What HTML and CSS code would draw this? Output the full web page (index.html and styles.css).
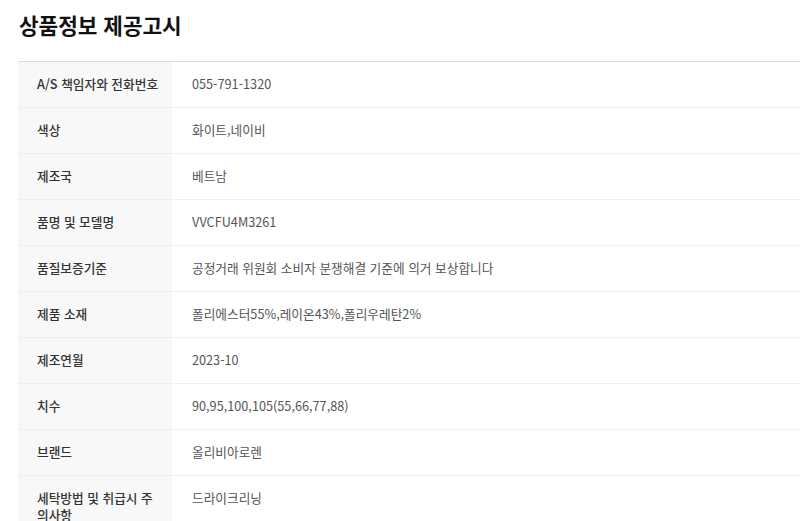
FILE: index.html
```html
<!DOCTYPE html>
<html lang="ko">
<head>
<meta charset="utf-8">
<link rel="stylesheet" href="styles.css">
</head>
<body>
<div class="page">
  <h2 class="title">상품정보 제공고시</h2>
  <table class="info">
    <tbody>
      <tr><th>A/S 책임자와 전화번호</th><td>055-791-1320</td></tr>
      <tr><th>색상</th><td>화이트,네이비</td></tr>
      <tr><th>제조국</th><td>베트남</td></tr>
      <tr><th>품명 및 모델명</th><td>VVCFU4M3261</td></tr>
      <tr><th>품질보증기준</th><td>공정거래 위원회 소비자 분쟁해결 기준에 의거 보상합니다</td></tr>
      <tr><th>제품 소재</th><td>폴리에스터55%,레이온43%,폴리우레탄2%</td></tr>
      <tr><th>제조연월</th><td>2023-10</td></tr>
      <tr><th>치수</th><td>90,95,100,105(55,66,77,88)</td></tr>
      <tr><th>브랜드</th><td>올리비아로렌</td></tr>
      <tr><th>세탁방법 및 취급시 주의사항</th><td>드라이크리닝</td></tr>
    </tbody>
  </table>
</div>
</body>
</html>
```
FILE: styles.css
```css
html, body {
  margin: 0;
  padding: 0;
  background: #fff;
}
body {
  font-family: "Noto Sans CJK KR", "Noto Sans", sans-serif;
  overflow: hidden;
}
.page {
  padding: 0 0 0 18px;
}
.title {
  margin: 0;
  padding: 10px 0 0 1px;
  height: 50px;
  font-size: 21.3px;
  line-height: 29px;
  font-weight: 700;
  color: #111;
  box-sizing: border-box;
}
.info {
  width: 782px;
  border-collapse: collapse;
  border-top: 1px solid #dcdcdc;
  margin-top: 11px;
  font-size: 12.7px;
  line-height: 17px;
}
.info th,
.info td {
  padding: 13px 19px 15px 19px;
  border-bottom: 1px solid #efefef;
  text-align: left;
  vertical-align: top;
}
.info th {
  width: 123px;
  padding-right: 12px;
  background: #f8f8f8;
  color: #333;
  font-weight: 500;
}
.info td {
  padding-left: 20px;
  color: #555;
  font-weight: 400;
}
```
